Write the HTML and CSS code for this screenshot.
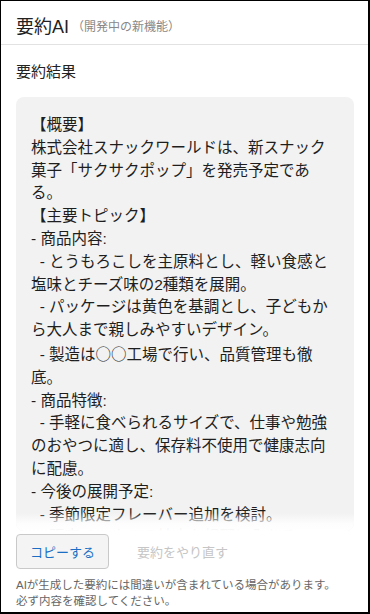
FILE: index.html
```html
<!DOCTYPE html>
<html lang="ja">
<head>
<meta charset="utf-8">
<title>要約AI</title>
<link rel="stylesheet" href="styles.css">
</head>
<body>
<div class="frame">
  <header class="hdr">
    <span class="title">要約AI</span><span class="sub">（開発中の新機能）</span>
  </header>
  <main class="main">
    <div class="label">要約結果</div>
    <div class="result">
      <div class="text">【概要】
株式会社スナックワールドは、新スナック菓子「サクサクポップ」を発売予定である。
【主要トピック】
- 商品内容:
  - とうもろこしを主原料とし、軽い食感と塩味とチーズ味の2種類を展開。
  - パッケージは黄色を基調とし、子どもから大人まで親しみやすいデザイン。
  - 製造は<span class="cjk">○○</span>工場で行い、品質管理も徹底。
- 商品特徴:
  - 手軽に食べられるサイズで、仕事や勉強のおやつに適し、保存料不使用で健康志向に配慮。
- 今後の展開予定:
  - 季節限定フレーバー追加を検討。
  - 販売チャネルの拡大も視野に入れる。
- 発売時期:
  - 来春より全国で販売開始予定。</div>
    </div>
    <div class="actions">
      <button class="btn">コピーする</button>
      <button class="btn-text" disabled>要約をやり直す</button>
    </div>
    <p class="note">AIが生成した要約には間違いが含まれている場合があります。<br>必ず内容を確認してください。</p>
  </main>
</div>
</body>
</html>
```

FILE: styles.css
```css
* { box-sizing: border-box; }
html, body { margin: 0; padding: 0; background: #fff; }
body {
  font-family: "Liberation Sans", "Noto Sans CJK JP", sans-serif;
  color: #222;
}
.frame {
  width: 370px;
  height: 614px;
  border-style: solid;
  border-color: #000;
  border-width: 1px 2px 2px 1px;
  display: flex;
  flex-direction: column;
  overflow: hidden;
}
.hdr {
  height: 44px;
  padding: 4px 15px 0 15px;
  border-bottom: 1px solid #e2e2e2;
  display: flex;
  align-items: center;
}
.title {
  font-size: 18px;
  color: #222;
}
.sub {
  font-size: 12px;
  color: #888;
  margin-left: 3px;
  position: relative;
  top: 1px;
}
.main {
  padding: 16px 14px 0 15px;
  display: flex;
  flex-direction: column;
}
.label {
  font-size: 15px;
  line-height: 22px;
  color: #222;
}
.result {
  margin-top: 14px;
  height: 434px;
  background: #f2f2f2;
  border-radius: 8px;
  padding: 17px 15px 0 15px;
  overflow: hidden;
  position: relative;
}
.result::after {
  content: "";
  position: absolute;
  left: 0;
  right: 0;
  bottom: 0;
  height: 18px;
  background: linear-gradient(rgba(255,255,255,0), rgba(255,255,255,0.85) 60%, #fff);
}
.text {
  white-space: pre-wrap;
  font-size: 15.5px;
  line-height: 22.8px;
  color: #1e1e1e;
}
.cjk {
  font-family: "Noto Sans CJK JP", sans-serif;
}
.actions {
  margin-top: 3px;
  display: flex;
  align-items: center;
  gap: 14px;
}
.btn {
  width: 93px;
  height: 35px;
  border: 1px solid #c9c9c9;
  border-radius: 4px;
  background: #f4f4f4;
  color: #1a6fc4;
  font-family: inherit;
  font-size: 13px;
  padding: 0;
}
.btn-text {
  height: 35px;
  border: none;
  background: transparent;
  color: #c6c6c6;
  font-family: inherit;
  font-size: 13px;
  padding: 0 14px;
}
.note {
  margin: 8px 0 0 0;
  font-size: 11.5px;
  line-height: 16px;
  color: #666;
}
```
